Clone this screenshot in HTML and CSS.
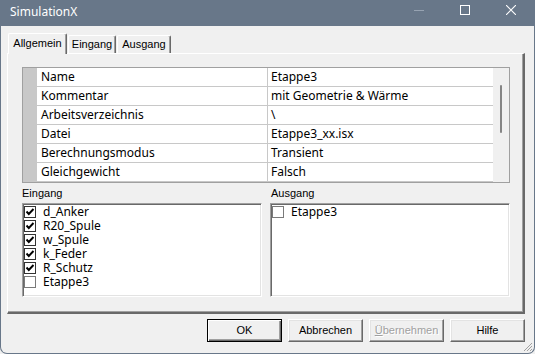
FILE: index.html
```html
<!DOCTYPE html>
<html lang="de">
<head>
    <meta charset="UTF-8">
    <meta name="viewport" content="width=device-width, initial-scale=1.0">
    <title>SimulationX</title>
    <link rel="stylesheet" href="styles.css">
</head>
<body>
    <div class="window">
        <div class="titlebar">
            <span class="title">SimulationX</span>
            <ul class="title-ctrl">
                <li class="ctrl">
                    <svg width="10" height="10" viewBox="0 0 10 10"><line x1="0" y1="5.5" x2="10" y2="5.5" stroke="#97a3b2" stroke-width="1"/></svg>
                </li>
                <li class="ctrl">
                    <svg width="10" height="10" viewBox="0 0 10 10"><rect x="0.5" y="0.5" width="9" height="9" fill="none" stroke="#fff" stroke-width="1"/></svg>
                </li>
                <li class="ctrl">
                    <svg width="10" height="10" viewBox="0 0 10 10"><path d="M0 0 L10 10 M10 0 L0 10" stroke="#fff" stroke-width="1.1"/></svg>
                </li>
            </ul>
        </div>

        <div class="dialog">
            <ul class="tabs">
                <li class="tab tab-active tab-allgemein">Allgemein</li>
                <li class="tab tab-eingang">Eingang</li>
                <li class="tab tab-ausgang">Ausgang</li>
            </ul>

            <div class="tab-panel">
                <div class="props">
                    <div class="props-gutter"></div>
                    <div class="props-rows">
                        <div class="prop-row"><span class="prop-name">Name</span><span class="prop-value">Etappe3</span></div>
                        <div class="prop-row"><span class="prop-name">Kommentar</span><span class="prop-value">mit Geometrie &amp; Wärme</span></div>
                        <div class="prop-row"><span class="prop-name">Arbeitsverzeichnis</span><span class="prop-value">\</span></div>
                        <div class="prop-row"><span class="prop-name">Datei</span><span class="prop-value">Etappe3_xx.isx</span></div>
                        <div class="prop-row"><span class="prop-name">Berechnungsmodus</span><span class="prop-value">Transient</span></div>
                        <div class="prop-row"><span class="prop-name">Gleichgewicht</span><span class="prop-value">Falsch</span></div>
                    </div>
                    <div class="props-scroll"><span class="props-thumb"></span></div>
                </div>

                <div class="lists">
                    <div class="list-group">
                        <p class="list-label">Eingang</p>
                        <ul class="list">
                            <li class="list-item"><span class="check check-on"><svg width="12" height="12" viewBox="0 0 12 12"><path d="M2.5 5.5 L4.8 8 L9.5 3" fill="none" stroke="#000" stroke-width="1.9"/></svg></span>d_Anker</li>
                            <li class="list-item"><span class="check check-on"><svg width="12" height="12" viewBox="0 0 12 12"><path d="M2.5 5.5 L4.8 8 L9.5 3" fill="none" stroke="#000" stroke-width="1.9"/></svg></span>R20_Spule</li>
                            <li class="list-item"><span class="check check-on"><svg width="12" height="12" viewBox="0 0 12 12"><path d="M2.5 5.5 L4.8 8 L9.5 3" fill="none" stroke="#000" stroke-width="1.9"/></svg></span>w_Spule</li>
                            <li class="list-item"><span class="check check-on"><svg width="12" height="12" viewBox="0 0 12 12"><path d="M2.5 5.5 L4.8 8 L9.5 3" fill="none" stroke="#000" stroke-width="1.9"/></svg></span>k_Feder</li>
                            <li class="list-item"><span class="check check-on"><svg width="12" height="12" viewBox="0 0 12 12"><path d="M2.5 5.5 L4.8 8 L9.5 3" fill="none" stroke="#000" stroke-width="1.9"/></svg></span>R_Schutz</li>
                            <li class="list-item"><span class="check"></span>Etappe3</li>
                        </ul>
                    </div>
                    <div class="list-group">
                        <p class="list-label">Ausgang</p>
                        <ul class="list">
                            <li class="list-item"><span class="check"></span>Etappe3</li>
                        </ul>
                    </div>
                </div>
            </div>

            <div class="buttons">
                <a class="btn btn-default" href="javascript:void(0)">OK</a>
                <a class="btn" href="javascript:void(0)">Abbrechen</a>
                <a class="btn btn-disabled" href="javascript:void(0)"><u>Ü</u>bernehmen</a>
                <a class="btn" href="javascript:void(0)">Hilfe</a>
            </div>
        </div>

        <svg class="grip" width="12" height="12" viewBox="0 0 12 12">
            <path d="M11 3 L3 11 M11 6 L6 11 M11 9 L9 11" stroke="#a0a0a0" stroke-width="1"/>
        </svg>
    </div>
</body>
</html>
```

FILE: styles.css
```css
* {
    margin: 0;
    padding: 0;
    list-style: none;
    text-decoration: none;
    box-sizing: border-box;
}
html, body {
    width: 100%;
    height: 100%;
    overflow: hidden;
    background: #f0f0f0;
}
body {
    font-family: "Noto Sans", "Liberation Sans", sans-serif;
    font-size: 12px;
    color: #000;
}
.window {
    position: relative;
    width: 535px;
    height: 354px;
    border: 1px solid #687789;
    border-top: 0;
    border-radius: 0 0 7px 7px;
    background: #f0f0f0;
    overflow: hidden;
    display: flex;
    flex-direction: column;
}

/* title bar */
.titlebar {
    height: 26px;
    flex: none;
    display: flex;
    justify-content: space-between;
    background: #687789;
}
.title {
    padding-left: 9px;
    line-height: 24px;
    color: #fff;
    font-size: 12px;
}
.title-ctrl {
    display: flex;
}
.ctrl {
    width: 46px;
    height: 20px;
    display: flex;
    justify-content: center;
    align-items: center;
}
.ctrl svg {
    display: block;
}

/* dialog body */
.dialog {
    padding: 7px 9px 0 6px;
}
.tabs {
    height: 20px;
    margin-left: 1px;
    display: flex;
    align-items: flex-end;
    font-family: "Liberation Sans", Arial, sans-serif;
    font-size: 11px;
}
.tab {
    height: 18px;
    padding-top: 2px;
    line-height: 13px;
    text-align: center;
    background: #f0f0f0;
    border: 1px solid #fff;
    border-bottom: 0;
    border-right-color: #696969;
    border-radius: 2px 2px 0 0;
    box-shadow: inset -1px 0 #a0a0a0;
}
.tab-active {
    position: relative;
    z-index: 1;
    height: 21px;
    margin-bottom: -1px;
    padding-top: 3px;
}
.tab-allgemein {
    width: 59px;
}
.tab-eingang {
    width: 48px;
    margin-left: 1px;
}
.tab-ausgang {
    width: 54px;
    margin-left: 1px;
}
.tab-panel {
    height: 261px;
    padding: 13px 13px 0 14px;
    border: 1px solid #fff;
    border-right: 2px solid #696969;
    border-bottom: 2px solid #696969;
    box-shadow: inset -1px -1px #a0a0a0;
}

/* property grid */
.props {
    display: flex;
    height: 116px;
    border: 1px solid #a0a0a0;
    background: #fff;
}
.props-gutter {
    width: 14px;
    background: #c8c8c8;
}
.props-rows {
    width: 456px;
}
.prop-row {
    display: flex;
    height: 19px;
    line-height: 18px;
    border-bottom: 1px solid #c8c8c8;
}
.prop-name {
    width: 231px;
    padding-left: 4px;
    border-right: 1px solid #c8c8c8;
}
.prop-value {
    flex: 1;
    padding-left: 3px;
}
.props-scroll {
    flex: 1;
    padding: 17px 0 0 7px;
    background: #f0f0f0;
}
.props-thumb {
    display: block;
    width: 2px;
    height: 48px;
    border-radius: 1px;
    background: #858585;
}

/* check lists */
.lists {
    display: grid;
    grid-template-columns: 1fr 1fr;
    column-gap: 8px;
}
.list-label {
    margin: 4px 0 3px;
    line-height: 13px;
    font-family: "Liberation Sans", Arial, sans-serif;
    font-size: 11px;
}
.list-group + .list-group .list-label {
    padding-left: 1px;
}
.list {
    height: 94px;
    padding-top: 1px;
    background: #fff;
    border: 1px solid;
    border-color: #a0a0a0 #fff #fff #a0a0a0;
    box-shadow: inset 1px 1px #696969, inset -1px -1px #e3e3e3;
    padding-left: 1px;
}
.list-item {
    display: flex;
    align-items: center;
    height: 14px;
    line-height: 14px;
}
.check {
    width: 12px;
    height: 12px;
    margin-right: 7px;
    border: 1px solid #7a7a7a;
    background: #fff;
}
.check-on {
    border-color: #333;
}
.check svg {
    display: block;
    margin: -1px 0 0 -1px;
}

/* buttons */
.buttons {
    display: flex;
    justify-content: flex-end;
    gap: 6px;
    margin-top: 5px;
}
.btn {
    width: 75px;
    height: 23px;
    line-height: 21px;
    text-align: center;
    color: #000;
    font-family: "Liberation Sans", Arial, sans-serif;
    font-size: 11px;
    background: #f0f0f0;
    border: 1px solid;
    border-color: #fff #696969 #696969 #fff;
    box-shadow: inset -1px -1px #a0a0a0, inset 1px 1px #e3e3e3;
}
.btn-default {
    border-color: #000;
    box-shadow: inset 1px 1px #fff, inset -1px -1px #696969, inset -2px -2px #a0a0a0;
}
.btn-disabled {
    color: #a0a0a0;
    text-shadow: 1px 1px #fff;
}
.btn-disabled u {
    text-decoration: underline;
}
.grip {
    position: absolute;
    right: 1px;
    bottom: 1px;
}
```
